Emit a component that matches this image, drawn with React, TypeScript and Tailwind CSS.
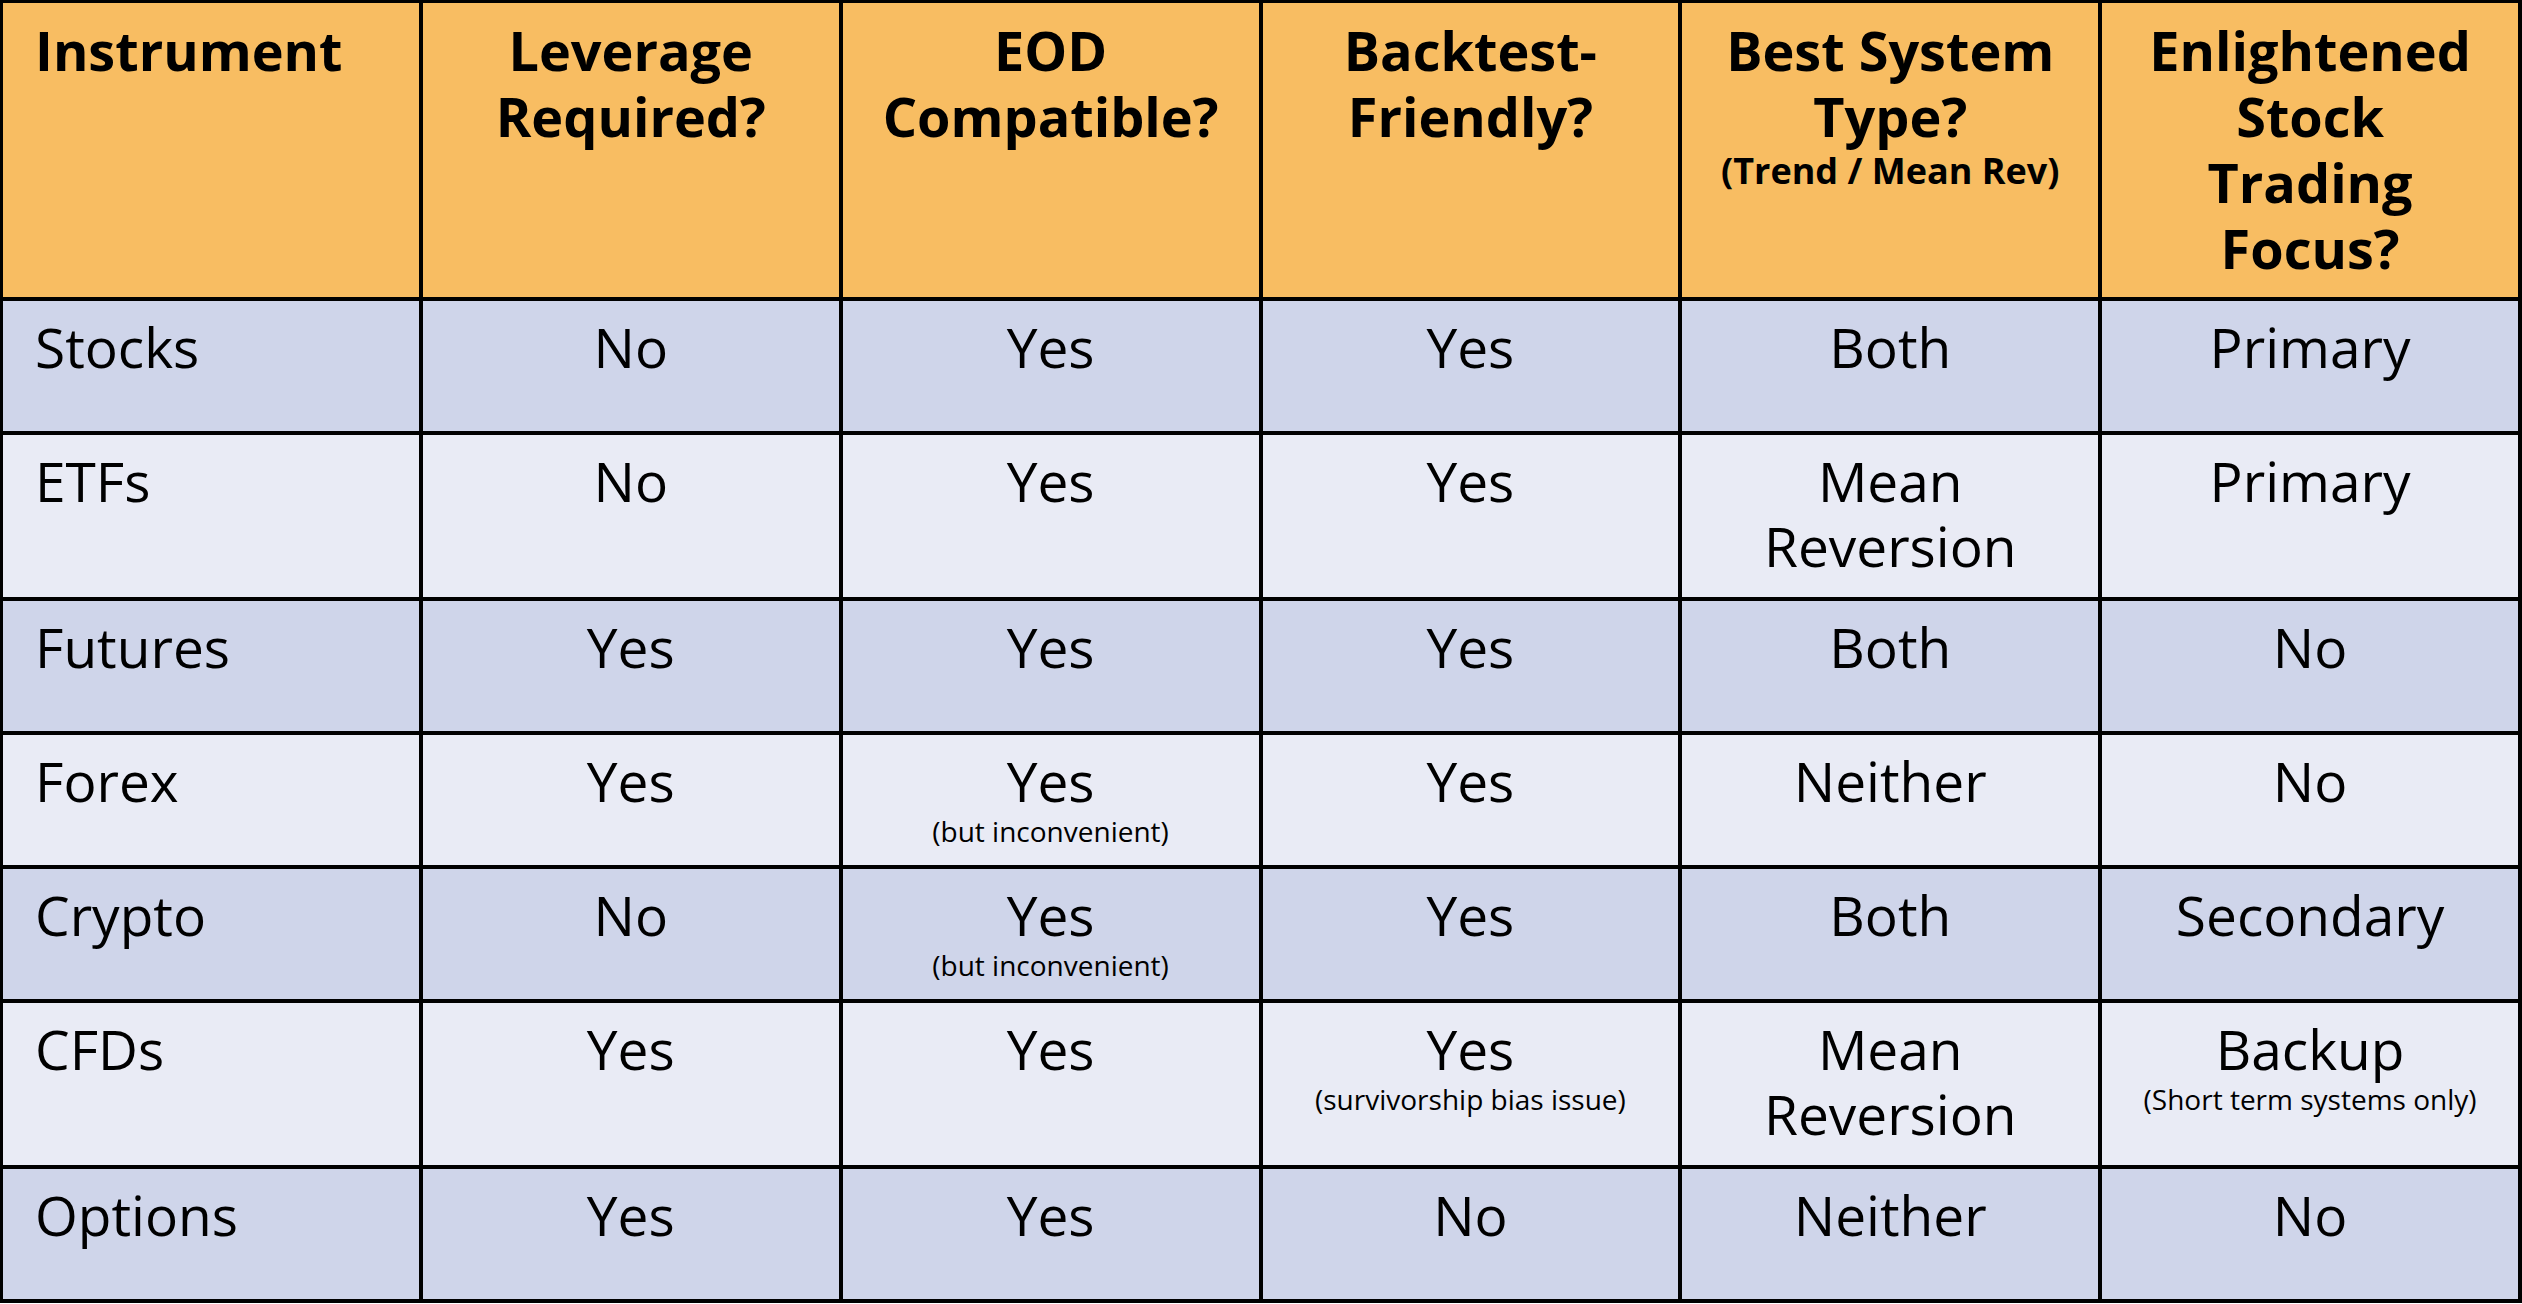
type Cell = { lines: string[]; note?: string };

const headers: Cell[] = [
  { lines: ["Instrument"] },
  { lines: ["Leverage", "Required?"] },
  { lines: ["EOD", "Compatible?"] },
  { lines: ["Backtest-", "Friendly?"] },
  { lines: ["Best System", "Type?"], note: "(Trend / Mean Rev)" },
  { lines: ["Enlightened", "Stock", "Trading", "Focus?"] },
];

const c = (text: string, note?: string): Cell => ({ lines: text.split("|"), note });

const rows: { name: string; cells: Cell[] }[] = [
  { name: "Stocks", cells: [c("No"), c("Yes"), c("Yes"), c("Both"), c("Primary")] },
  { name: "ETFs", cells: [c("No"), c("Yes"), c("Yes"), c("Mean|Reversion"), c("Primary")] },
  { name: "Futures", cells: [c("Yes"), c("Yes"), c("Yes"), c("Both"), c("No")] },
  {
    name: "Forex",
    cells: [c("Yes"), c("Yes", "(but inconvenient)"), c("Yes"), c("Neither"), c("No")],
  },
  {
    name: "Crypto",
    cells: [c("No"), c("Yes", "(but inconvenient)"), c("Yes"), c("Both"), c("Secondary")],
  },
  {
    name: "CFDs",
    cells: [
      c("Yes"),
      c("Yes"),
      c("Yes", "(survivorship bias issue)"),
      c("Mean|Reversion"),
      c("Backup", "(Short term systems only)"),
    ],
  },
  { name: "Options", cells: [c("Yes"), c("Yes"), c("No"), c("Neither"), c("No")] },
];

export default function App() {
  return (
    <div className="w-[2522px] h-[1304px] bg-white font-['Open_Sans',sans-serif] text-black">
      <div className="grid grid-cols-6 grid-rows-[294px_130px_162px_130px_130px_130px_162px_130px] gap-[4px] bg-black pt-[3px] pl-[3px] pr-[4px] pb-[4px]">
        {/* Header row */}
        {headers.map((h, i) => (
          <div
            key={i}
            className={`bg-[#f8bd62] pt-[14px] font-bold ${
              i === 0 ? "pl-[32px] text-left" : "text-center"
            }`}
          >
            {h.lines.map((line, j) => (
              <div key={j} className="text-[54px] leading-[66px]">
                {line}
              </div>
            ))}
            {h.note && <div className="text-[36px] leading-[44px]">{h.note}</div>}
          </div>
        ))}

        {/* Body rows */}
        {rows.map((row, r) => {
          const bg = r % 2 === 0 ? "bg-[#cfd5ea]" : "bg-[#e9ebf5]";
          return [
            <div key={`${r}-name`} className={`${bg} pl-[32px] pt-[13px] text-[55px] leading-[65px]`}>
              {row.name}
            </div>,
            ...row.cells.map((cell, i) => (
              <div key={`${r}-${i}`} className={`${bg} pt-[13px] text-center`}>
                {cell.lines.map((line, j) => (
                  <div key={j} className="text-[55px] leading-[65px]">
                    {line}
                  </div>
                ))}
                {cell.note && <div className="text-[28px] leading-[36px]">{cell.note}</div>}
              </div>
            )),
          ];
        })}
      </div>
    </div>
  );
}
